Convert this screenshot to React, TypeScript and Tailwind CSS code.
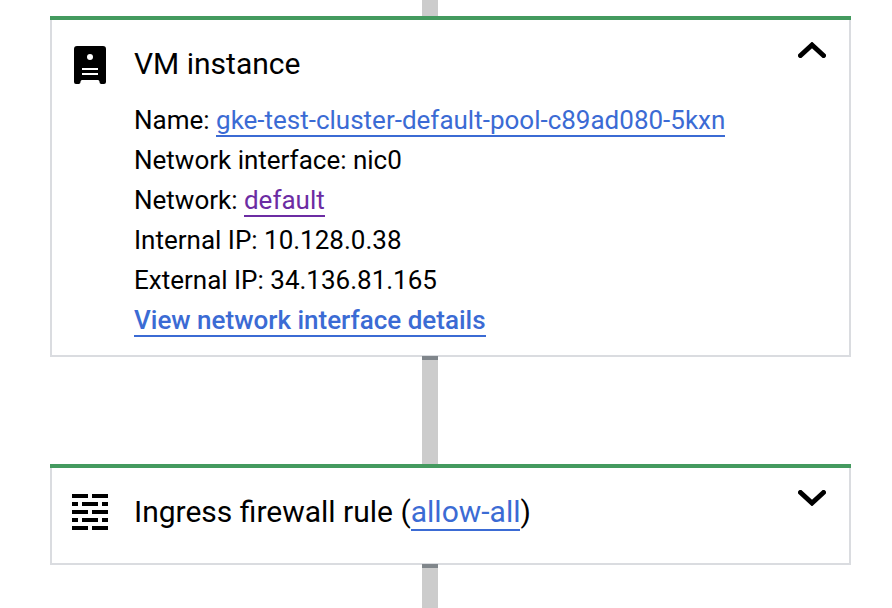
import React from 'react';

const Connector = ({ height }: { height: string }) => (
  <div className={`relative z-10 ml-[422px] w-4 bg-[#cccccc] ${height}`} />
);

const VmIcon = () => (
  <svg width="32" height="38" viewBox="0 0 32 38" className="shrink-0">
    <path
      d="M3 0h26a3 3 0 0 1 3 3v33a2 2 0 0 1-2 2h-3a2 2 0 0 1-1.5-2c0-1-.5-2-1.5-2H8c-1 0-1.500 1-1.500 2A2 2 0 0 1 5 38H2a2 2 0 0 1-2-2V3a3 3 0 0 1 3-3z"
      fill="#000"
    />
    <circle cx="16" cy="11" r="3" fill="#fff" />
    <rect x="8" y="22" width="16" height="2" fill="#fff" />
    <rect x="8" y="27" width="16" height="2" fill="#fff" />
  </svg>
);

const FirewallIcon = () => (
  <svg width="36" height="36" viewBox="0 0 36 36" className="shrink-0">
    <path
      d="M0 0h16v4H0zM20 0h16v4H20zM0 8h6v4H0zM10 8h16v4H10zM30 8h6v4h-6zM0 16h16v4H0zM20 16h16v4H20zM0 24h6v4H0zM10 24h16v4H10zM30 24h6v4h-6zM0 32h16v4H0zM20 32h16v4H20z"
      fill="#000"
    />
  </svg>
);

const Chevron = ({ up }: { up?: boolean }) => (
  <svg width="28" height="16" viewBox="0 0 28 16" className="shrink-0">
    <path
      d={up ? 'M2.5 13.500 14 3l11.500 10.500' : 'M2.500 2.500 14 13l11.500-10.500'}
      fill="none"
      stroke="#000"
      strokeWidth="5"
      strokeLinecap="round"
    />
  </svg>
);

const Link = ({ children, purple, bold }: { children: React.ReactNode; purple?: boolean; bold?: boolean }) => (
  <a
    href="#"
    className={`border-b-2 ${bold ? 'font-medium' : ''} ${
      purple ? 'border-[#6c2ca3] text-[#6c2ca3]' : 'border-[#3b6bd4] text-[#3b6bd4]'
    }`}
  >
    {children}
  </a>
);

export default function App() {
  return (
    <div className="h-[608px] w-[892px] overflow-hidden bg-white font-['Roboto',sans-serif] text-black">
      <Connector height="h-4" />

      <div className="ml-[50px] w-[801px] border-t-4 border-[#449a5f]">
        <div className="flex h-[337px] items-start border-x-2 border-b-2 border-[#dadce0] pl-[22px] pr-[23px]">
          <div className="mt-[26px] w-[60px]">
            <VmIcon />
          </div>
          <div className="flex-1 pt-6">
            <div className="text-[30px] leading-10">VM instance</div>
            <div className="mt-[16px] text-[26px] leading-10">
              <div>
                Name: <Link>gke-test-cluster-default-pool-c89ad080-5kxn</Link>
              </div>
              <div>Network interface: nic0</div>
              <div>
                Network: <Link purple>default</Link>
              </div>
              <div>Internal IP: 10.128.0.38</div>
              <div>External IP: 34.136.81.165</div>
              <div>
                <Link bold>View network interface details</Link>
              </div>
            </div>
          </div>
          <div className="mt-[22px]">
            <Chevron up />
          </div>
        </div>
      </div>

      <div className="-mt-px">
        <Connector height="h-[108px] border-t-4 border-[#80868b]" />
      </div>

      <div className="ml-[50px] w-[801px] border-t-4 border-[#449a5f]">
        <div className="flex h-[97px] items-start border-x-2 border-b-2 border-[#dadce0] pl-5 pr-[23px]">
          <div className="mt-[26px] w-[62px]">
            <FirewallIcon />
          </div>
          <div className="flex-1 pt-6 text-[30px] leading-10">
            Ingress firewall rule (<Link>allow-all</Link>)
          </div>
          <div className="mt-[22px]">
            <Chevron />
          </div>
        </div>
      </div>

      <div className="-mt-px">
        <Connector height="h-[44px] border-t-4 border-[#80868b]" />
      </div>
    </div>
  );
}
